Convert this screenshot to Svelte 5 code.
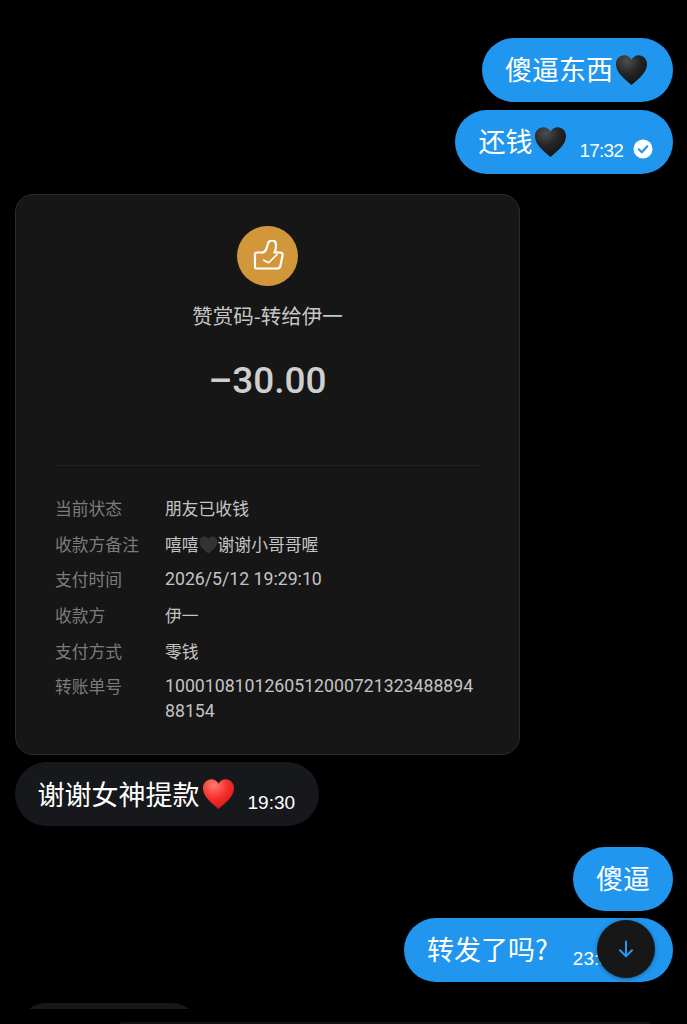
<script>
  const rows = [
    { label: '当前状态', value: '朋友已收钱' },
    { label: '收款方备注', value: '嘻嘻', heart: true, rest: '谢谢小哥哥喔' },
    { label: '支付时间', value: '2026/5/12 19:29:10', num: true },
    { label: '收款方', value: '伊一' },
    { label: '支付方式', value: '零钱' },
    { label: '转账单号', value: '100010810126051200072132348889488154', num: true }
  ];
</script>

{#snippet heart(kind)}
  <svg class="emoji" viewBox="0 0 34 32" aria-hidden="true">
    <defs>
      <radialGradient id={'g' + kind} cx="0.35" cy="0.2" r="0.9">
        {#if kind === 'red'}
          <stop offset="0" stop-color="#ff7a70" />
          <stop offset="0.5" stop-color="#f5302b" />
          <stop offset="1" stop-color="#d0111a" />
        {:else}
          <stop offset="0" stop-color="#4e4e4e" />
          <stop offset="0.45" stop-color="#262626" />
          <stop offset="1" stop-color="#0e0e0e" />
        {/if}
      </radialGradient>
    </defs>
    <path fill={'url(#g' + kind + ')'} d="M17 31.500C13 27.500 1 20 1 10 1 4.500 5 .8 9.500 .8 12.800 .8 15.500 2.500 17 5.500 18.500 2.500 21.200 .8 24.500 .8 29 .8 33 4.500 33 10 33 20 21 27.500 17 31.500Z" />
  </svg>
{/snippet}

<main class="chat">
  <div class="bubble out first"><span class="msg">傻逼东西</span>{@render heart('black')}</div>
  <div class="bubble out second">
    <span class="msg">还钱</span>{@render heart('black')}
    <span class="time">17:32</span>
    <svg class="check" viewBox="0 0 20 20" aria-hidden="true">
      <circle cx="10" cy="10" r="9.500" fill="#fff" />
      <path d="M5.800 10.300 8.800 13.200 14.300 7.300" fill="none" stroke="#2196ee" stroke-width="2.200" stroke-linecap="round" stroke-linejoin="round" />
    </svg>
  </div>

  <section class="card">
    <div class="badge">
      <svg viewBox="0 2.500 32 32" width="32" height="32" aria-hidden="true">
        <path d="M3 30V17Q3 15 5 15H10Q13 15 14.500 11L16 6Q17 3 20 3 24 3 24 8 24 12 22.500 15H28Q31 15 30.500 18L28.500 28Q28 31 25 31H5Q3 31 3 30Z" fill="none" stroke="#fff" stroke-width="2.200" stroke-linejoin="round" />
        <path d="M11.700 22.700 16.700 25.300 25 17" fill="none" stroke="#fff" stroke-width="1.600" stroke-linecap="round" stroke-linejoin="round" />
      </svg>
    </div>
    <h2 class="title">赞赏码-转给伊一</h2>
    <div class="amount">–30.00</div>
    <div class="divider"></div>
    <dl class="rows">
      {#each rows as row}
        <dt>{row.label}</dt>
        <dd class:num={row.num}>
          {row.value}{#if row.heart}<svg class="mini" viewBox="0 0 34 32" aria-hidden="true"><path fill="#333" d="M17 31.500C13 27.500 1 20 1 10 1 4.500 5 .8 9.500 .8 12.800 .8 15.500 2.500 17 5.500 18.500 2.500 21.200 .8 24.500 .8 29 .8 33 4.500 33 10 33 20 21 27.500 17 31.500Z" /></svg>{row.rest}{/if}
        </dd>
      {/each}
    </dl>
  </section>

  <div class="bubble in thanks">
    <span class="msg">谢谢女神提款</span>{@render heart('red')}
    <span class="time">19:30</span>
  </div>

  <div class="bubble out third"><span class="msg">傻逼</span></div>
  <div class="bubble out fourth">
    <span class="msg">转发了吗?</span>
    <span class="time">23:58</span>
  </div>

  <div class="stub"></div>

  <div class="footer"><div class="footer-bar"></div></div>

  <button class="down" aria-label="scroll to bottom">
    <svg viewBox="0 0 20 20" width="20" height="20" aria-hidden="true">
      <path d="M10 2.500V17M4 11.200 10 17.200 16 11.200" fill="none" stroke="#2a9af0" stroke-width="2" stroke-linecap="round" stroke-linejoin="round" />
    </svg>
  </button>
</main>

<style>
  :global(body) {
    margin: 0;
    background: #000;
  }
  .chat {
    position: relative;
    box-sizing: border-box;
    height: 1024px;
    overflow: hidden;
    padding: 38px 14px 0 15px;
    display: flex;
    flex-direction: column;
    font-family: "Noto Sans CJK SC", "Liberation Sans", sans-serif;
    background: #000;
  }
  .bubble {
    box-sizing: border-box;
    height: 64px;
    border-radius: 32px;
    display: flex;
    align-items: center;
    color: #fff;
    font-size: 27px;
    flex: none;
  }
  .out {
    background: #2196ee;
    align-self: flex-end;
  }
  .in {
    background: #17181b;
    align-self: flex-start;
  }
  .msg {
    line-height: 1;
    white-space: nowrap;
    margin-bottom: 4px;
  }
  .emoji {
    width: 33px;
    height: 32px;
    margin-left: 2px;
    flex: none;
  }
  .time {
    font-family: "Liberation Sans", sans-serif;
    font-size: 19px;
    line-height: 1;
    align-self: flex-end;
    margin-bottom: 14px;
    white-space: nowrap;
  }
  .first {
    padding: 0 25px 0 23px;
  }
  .second {
    margin-top: 8px;
    padding: 0 20px 0 23px;
  }
  .second .time {
    margin-left: 12px;
    letter-spacing: -0.800px;
  }
  .check {
    width: 20px;
    height: 20px;
    margin-left: 10px;
    align-self: flex-end;
    margin-bottom: 15px;
    flex: none;
  }
  .card {
    box-sizing: border-box;
    width: 505px;
    height: 561px;
    margin-top: 20px;
    padding: 31px 39px 0;
    background: #161616;
    border: 1px solid #2b2b2b;
    border-radius: 18px;
    display: flex;
    flex-direction: column;
    align-items: center;
    flex: none;
  }
  .badge {
    width: 61px;
    height: 60px;
    border-radius: 50%;
    background: #d2973a;
    display: flex;
    align-items: center;
    justify-content: center;
    flex: none;
  }
  .title {
    margin: 16px 0 0;
    font-size: 20.500px;
    font-weight: 400;
    line-height: 26px;
    color: #c6c6c6;
  }
  .amount {
    margin-top: 31px;
    font-family: "Roboto", "Liberation Sans", sans-serif;
    font-size: 37px;
    font-weight: 500;
    line-height: 44px;
    color: #cfcfcf;
  }
  .divider {
    align-self: stretch;
    height: 1px;
    margin-top: 62px;
    background: #222;
    flex: none;
  }
  .rows {
    align-self: stretch;
    margin: 30px 0 0;
    display: grid;
    grid-template-columns: 110px 1fr;
    row-gap: 11px;
    font-size: 16.800px;
    line-height: 24.500px;
  }
  dt {
    color: #7c7c7c;
  }
  dd {
    margin: 0;
    color: #c4c4c4;
    word-break: break-all;
  }
  dd.num {
    font-family: "Roboto", "Liberation Sans", sans-serif;
    font-size: 17.700px;
    line-height: 25px;
  }
  .mini {
    width: 19px;
    height: 18px;
    vertical-align: -3px;
  }
  .thanks {
    margin-top: 7px;
    padding: 0 24px 0 22.500px;
  }
  .thanks .msg {
    margin-bottom: 2px;
  }
  .thanks .time {
    margin-left: 13px;
  }
  .third {
    margin-top: 21px;
    padding: 0 23px;
  }
  .fourth {
    margin-top: 7px;
    padding: 0 24px 0 23px;
    width: 269px;
  }
  .fourth .time {
    margin-left: 25px;
  }
  .stub {
    width: 188px;
    height: 64px;
    margin-top: 21px;
    border-radius: 32px;
    background: #17181b;
    flex: none;
  }
  .footer {
    position: absolute;
    left: 0;
    right: 0;
    top: 1009px;
    height: 15px;
    background: #000;
  }
  .footer-bar {
    height: 2px;
    margin: 13px 37px 0 120px;
    border-radius: 2px 2px 0 0;
    background: #121212;
  }
  .down {
    position: absolute;
    left: 597px;
    top: 920px;
    width: 58px;
    height: 58px;
    padding: 0;
    border: 0;
    border-radius: 50%;
    background: #171717;
    display: flex;
    align-items: center;
    justify-content: center;
    box-shadow: 0 1px 4px rgba(0, 0, 0, 0.35);
  }
</style>
